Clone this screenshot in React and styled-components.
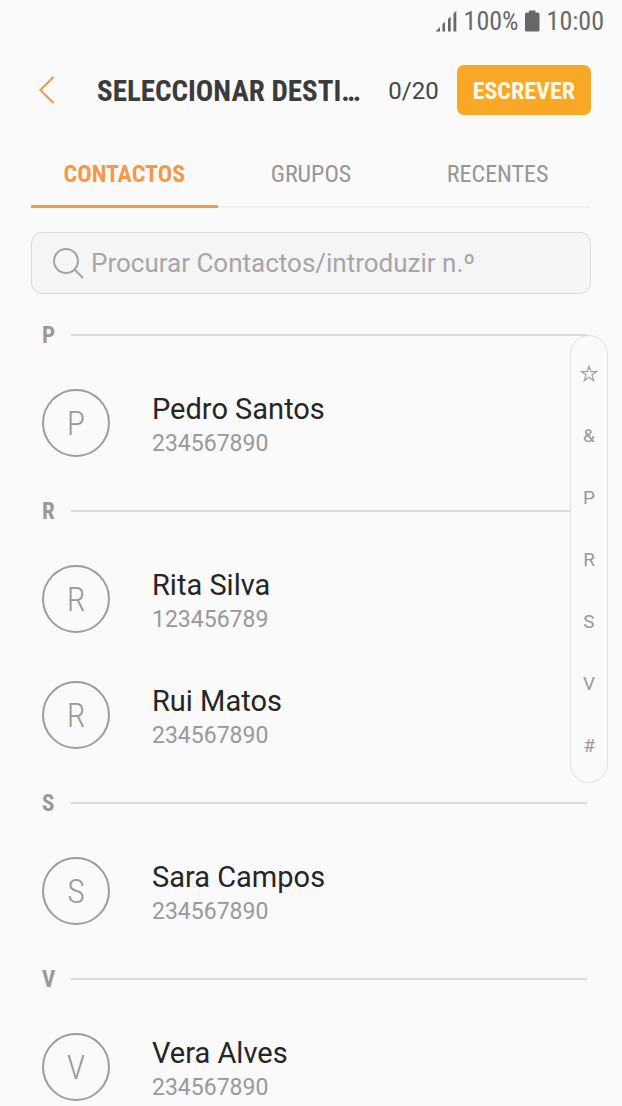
import React, { useState } from 'react';
import styled, { createGlobalStyle } from 'styled-components';

const GlobalStyle = createGlobalStyle`
  * {
    box-sizing: border-box;
  }

  body {
    margin: 0;
    background-color: #fafafa;
    font-family: Roboto, sans-serif;
  }

  button, input {
    font-family: inherit;
  }
`;

const Screen = styled.div`
  display: flex;
  flex-direction: column;
  height: 100vh;
  overflow: hidden;
`;

const StatusBar = styled.div`
  display: flex;
  align-items: center;
  justify-content: flex-end;
  gap: 6px;
  height: 42px;
  padding-right: 18px;
  color: #686868;
  font-family: 'Roboto Condensed', Roboto, sans-serif;
  font-size: 26px;
`;

const Header = styled.header`
  display: flex;
  align-items: center;
  height: 96px;
  padding: 0 31px;
`;

const BackButton = styled.button`
  display: flex;
  margin-right: 34px;
  padding: 0 8px;
  border: none;
  background: none;
  cursor: pointer;
`;

const Title = styled.h1`
  flex: 1;
  margin: 0;
  padding-top: 2px;
  white-space: nowrap;
  color: #3b3b3b;
  font-family: 'Roboto Condensed', Roboto, sans-serif;
  font-size: 29px;
  font-weight: 700;
`;

const Counter = styled.span`
  margin-right: 18px;
  padding-top: 2px;
  color: #454545;
  font-size: 24px;
`;

const WriteButton = styled.button`
  height: 50px;
  padding: 2px 16px 0;
  border: none;
  border-radius: 7px;
  background-color: #f9a825;
  color: #fff8e6;
  font-family: 'Roboto Condensed', Roboto, sans-serif;
  font-size: 24px;
  font-weight: 700;
  cursor: pointer;
`;

const Tabs = styled.div`
  display: grid;
  grid-template-columns: repeat(3, 1fr);
  height: 70px;
  margin: 0 31px;
  box-shadow: inset 0 -2px #f0f0f0;
`;

const Tab = styled.button`
  padding: 4px 0 0;
  border: none;
  border-bottom: 3px solid ${props => props.$active ? '#f2994a' : 'transparent'};
  background: none;
  color: ${props => props.$active ? '#f2994a' : '#969696'};
  font-family: 'Roboto Condensed', Roboto, sans-serif;
  font-size: 24px;
  font-weight: ${props => props.$active ? 700 : 400};
  cursor: pointer;
`;

const SearchBox = styled.label`
  display: flex;
  align-items: center;
  gap: 6px;
  height: 62px;
  flex-shrink: 0;
  margin: 24px 31px 0;
  padding: 0 21px;
  border: 1px solid #dadada;
  border-radius: 11px;
  background-color: #f5f5f5;
`;

const SearchInput = styled.input`
  flex: 1;
  min-width: 0;
  padding: 0;
  border: none;
  outline: none;
  background: none;
  color: #252525;
  font-size: 26px;

  &::placeholder {
    color: #a6a6a6;
    opacity: 1;
  }
`;

const ListArea = styled.main`
  position: relative;
  flex: 1;
  min-height: 0;
  padding-top: 11px;
`;

const ContactScroll = styled.div`
  height: 100%;
  padding: 0 35px 0 42px;
  overflow-y: auto;
  scrollbar-width: none;
`;

const SectionTitle = styled.h2`
  display: flex;
  align-items: center;
  height: 60px;
  margin: 0;
  color: #999;
  font-family: 'Roboto Condensed', Roboto, sans-serif;
  font-size: 23px;
  font-weight: 700;

  span {
    width: 29px;
  }

  &::after {
    content: '';
    flex: 1;
    height: 2px;
    background-color: #d9d9d9;
  }
`;

const ContactList = styled.ul`
  margin: 0;
  padding: 0;
  list-style-type: none;
`;

const ContactItem = styled.li`
  display: flex;
  align-items: center;
  gap: 42px;
  height: 116px;
`;

const Avatar = styled.div`
  display: flex;
  align-items: center;
  justify-content: center;
  width: 68px;
  height: 68px;
  border: 2px solid #9c9c9c;
  border-radius: 50%;
  color: #999;
  font-family: 'Roboto Condensed', Roboto, sans-serif;
  font-size: 34px;
  font-weight: 300;
`;

const ContactInfo = styled.div`
  padding-top: 4px;
`;

const ContactName = styled.div`
  color: #252525;
  font-size: 29px;
  line-height: 38px;
`;

const ContactNumber = styled.div`
  color: #999;
  font-size: 23px;
  line-height: 32px;
`;

const IndexBar = styled.nav`
  position: absolute;
  top: 41px;
  right: 14px;
  display: flex;
  flex-direction: column;
  width: 38px;
  padding: 6px 0;
  border: 1px solid #e2e2e2;
  border-radius: 19px;
  background-color: #fafafa;
`;

const IndexLink = styled.a`
  display: flex;
  align-items: center;
  justify-content: center;
  height: 62px;
  color: #999;
  font-size: 19px;
  text-decoration: none;
`;

const SECTIONS = [
  { letter: 'P', contacts: [{ name: 'Pedro Santos', number: '234567890' }] },
  {
    letter: 'R',
    contacts: [
      { name: 'Rita Silva', number: '123456789' },
      { name: 'Rui Matos', number: '234567890' },
    ],
  },
  { letter: 'S', contacts: [{ name: 'Sara Campos', number: '234567890' }] },
  { letter: 'V', contacts: [{ name: 'Vera Alves', number: '234567890' }] },
];

const TABS = ['CONTACTOS', 'GRUPOS', 'RECENTES'];

const INDEX = ['&', 'P', 'R', 'S', 'V', '#'];

const SignalIcon = () => (
  <svg width="23" height="22" viewBox="0 0 23 22" fill="#686868" aria-hidden="true">
    <path d="M0.500 21.500 L5 17 V21.500Z M7.500 14 L10 12 V21.500 H7.500Z M13 9 L15.700 6.500 V21.500 H13Z M18.500 3.500 L21.300 0.800 V21.500 H18.500Z" />
  </svg>
);

const BatteryIcon = () => (
  <svg width="16" height="22" viewBox="0 0 16 22" fill="#686868" aria-hidden="true">
    <path d="M4 0.500 H10.500 V2.500 H13 Q14.500 2.500 14.500 4 V20 Q14.500 21.500 13 21.500 H1.500 Q0 21.500 0 20 V4 Q0 2.500 1.500 2.500 H4Z" />
  </svg>
);

const BackIcon = () => (
  <svg width="16" height="28" viewBox="0 0 16 28" fill="none" stroke="#ee944a" strokeWidth="2" aria-hidden="true">
    <path d="M14.500 1 L1.300 14 L14.500 27" />
  </svg>
);

const SearchIcon = () => (
  <svg width="32" height="32" viewBox="0 0 32 32" fill="none" stroke="#a3a3a3" strokeWidth="2" aria-hidden="true">
    <circle cx="13" cy="14" r="12" />
    <path d="M21.500 22.500 L30 31" />
  </svg>
);

const StarIcon = () => (
  <svg width="18" height="18" viewBox="0 0 18 18" fill="none" stroke="#a0a0a0" strokeWidth="1.200" aria-hidden="true">
    <path d="M9 2.300 L10.800 7.600 L16.600 7.600 L12 11 L13.700 16.600 L9 13.300 L4.300 16.600 L6 11 L1.400 7.600 L7.200 7.600Z" />
  </svg>
);

const App = () => {
  const [activeTab, setActiveTab] = useState('CONTACTOS');
  const [query, setQuery] = useState('');

  return (
    <Screen>
      <GlobalStyle />
      <StatusBar>
        <SignalIcon />
        <span>100%</span>
        <BatteryIcon />
        <span>10:00</span>
      </StatusBar>
      <Header>
        <BackButton aria-label="Voltar">
          <BackIcon />
        </BackButton>
        <Title>SELECCIONAR DESTI…</Title>
        <Counter>0/20</Counter>
        <WriteButton>ESCREVER</WriteButton>
      </Header>
      <Tabs role="tablist">
        {TABS.map((tab) => (
          <Tab
            key={tab}
            role="tab"
            aria-selected={tab === activeTab}
            $active={tab === activeTab}
            onClick={() => setActiveTab(tab)}
          >
            {tab}
          </Tab>
        ))}
      </Tabs>
      <SearchBox>
        <SearchIcon />
        <SearchInput
          type="text"
          aria-label="Procurar Contactos"
          placeholder="Procurar Contactos/introduzir n.º"
          value={query}
          onChange={(e) => setQuery(e.target.value)}
        />
      </SearchBox>
      <ListArea>
        <ContactScroll>
          {SECTIONS.map((section) => (
            <section key={section.letter} id={`section-${section.letter}`}>
              <SectionTitle><span>{section.letter}</span></SectionTitle>
              <ContactList>
                {section.contacts.map((contact) => (
                  <ContactItem key={contact.name}>
                    <Avatar>{contact.name[0]}</Avatar>
                    <ContactInfo>
                      <ContactName>{contact.name}</ContactName>
                      <ContactNumber>{contact.number}</ContactNumber>
                    </ContactInfo>
                  </ContactItem>
                ))}
              </ContactList>
            </section>
          ))}
        </ContactScroll>
        <IndexBar>
          <IndexLink href="#favoritos" aria-label="Favoritos">
            <StarIcon />
          </IndexLink>
          {INDEX.map((entry) => (
            <IndexLink key={entry} href={`#section-${entry}`}>{entry}</IndexLink>
          ))}
        </IndexBar>
      </ListArea>
    </Screen>
  );
};

export default App;
